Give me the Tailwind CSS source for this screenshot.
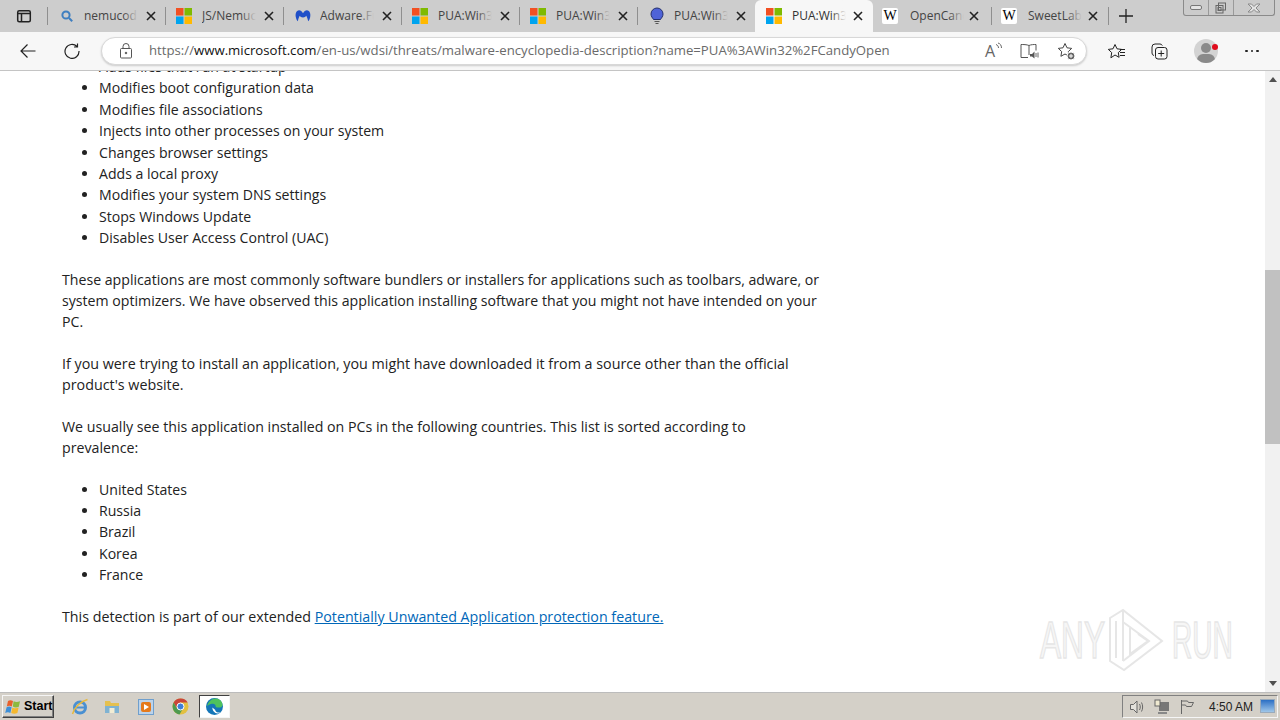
<!DOCTYPE html>
<html lang="en">
<head>
    <meta charset="UTF-8">
    <title>PUA:Win32/CandyOpen</title>
    <script src="https://cdn.jsdelivr.net/npm/@tailwindcss/browser@4"></script>
</head>
<body class="w-[1280px] h-[720px] overflow-hidden bg-white font-['Open_Sans',sans-serif] text-[#222] flex flex-col relative">
    <!-- Tab strip -->
    <div class="h-[32px] bg-[#cdcdcd] flex items-stretch shrink-0 relative">
        <div class="w-[47px] flex items-center justify-center">
            <svg class="ml-[1px]" width="16" height="16" viewBox="0 0 16 16" fill="none" stroke="#222" stroke-width="1.5"><rect x="1.7" y="2.7" width="12.6" height="11" rx="1.5"/><path d="M1.7 5.5h12.6M5.5 5.500v8" /></svg>
        </div>

        <div class="w-[118px] border-l border-[#8f8f8f] my-[7px] flex items-center relative text-[12px] text-[#444]">
            <span class="w-[36px] pl-[11px] flex"><svg width="16" height="16" viewBox="0 0 16 16" fill="none" stroke="#3f7fc0" stroke-width="2"><circle cx="7" cy="7" r="3.6"/><path d="M10 10l3.2 3.2"/></svg></span>
            <span class="w-[54px] overflow-hidden whitespace-nowrap">nemucod</span>
            <span class="absolute w-[15px] h-full left-[75px] bg-gradient-to-r from-transparent to-[#cdcdcd]"></span>
            <svg class="absolute left-[97px]" width="12" height="12" viewBox="0 0 12 12" stroke="#222" stroke-width="1.6"><path d="M2 2l8 8M10 2l-8 8"/></svg>
        </div>
        <div class="w-[118px] border-l border-[#8f8f8f] my-[7px] flex items-center relative text-[12px] text-[#444]">
            <span class="w-[36px] pl-[10px] flex"><svg width="16" height="16" viewBox="0 0 16 16"><rect width="7.5" height="7.5" fill="#f25022"/><rect x="8.5" width="7.5" height="7.5" fill="#7fba00"/><rect y="8.5" width="7.5" height="7.5" fill="#00a4ef"/><rect x="8.5" y="8.5" width="7.5" height="7.5" fill="#ffb900"/></svg></span>
            <span class="w-[54px] overflow-hidden whitespace-nowrap">JS/Nemucod</span>
            <span class="absolute w-[15px] h-full left-[75px] bg-gradient-to-r from-transparent to-[#cdcdcd]"></span>
            <svg class="absolute left-[97px]" width="12" height="12" viewBox="0 0 12 12" stroke="#222" stroke-width="1.6"><path d="M2 2l8 8M10 2l-8 8"/></svg>
        </div>
        <div class="w-[118px] border-l border-[#8f8f8f] my-[7px] flex items-center relative text-[12px] text-[#444]">
            <span class="w-[36px] pl-[11px] flex"><svg width="16" height="16" viewBox="0 0 16 16" fill="#1f4fc8"><path d="M8 5.2C9.2 3 11 2 12.6 2.4 15 3 15.800 6 15.200 9c-.3 1.700-1 3.300-2 4.300-.6-2.500-1.200-4.300-2-5.500-.8 1-1.500 1.700-3.200 1.700S5.400 8.800 4.800 7.800c-.8 1.200-1.400 3-2 5.500-1-1-1.700-2.600-2-4.300C.2 6 1 3 3.400 2.400 5 2 6.800 3 8 5.200z"/></svg></span>
            <span class="w-[54px] overflow-hidden whitespace-nowrap">Adware.Fusion</span>
            <span class="absolute w-[15px] h-full left-[75px] bg-gradient-to-r from-transparent to-[#cdcdcd]"></span>
            <svg class="absolute left-[97px]" width="12" height="12" viewBox="0 0 12 12" stroke="#222" stroke-width="1.6"><path d="M2 2l8 8M10 2l-8 8"/></svg>
        </div>
        <div class="w-[118px] border-l border-[#8f8f8f] my-[7px] flex items-center relative text-[12px] text-[#444]">
            <span class="w-[36px] pl-[10px] flex"><svg width="16" height="16" viewBox="0 0 16 16"><rect width="7.500" height="7.500" fill="#f25022"/><rect x="8.500" width="7.500" height="7.500" fill="#7fba00"/><rect y="8.500" width="7.500" height="7.500" fill="#00a4ef"/><rect x="8.500" y="8.500" width="7.500" height="7.500" fill="#ffb900"/></svg></span>
            <span class="w-[54px] overflow-hidden whitespace-nowrap">PUA:Win32</span>
            <span class="absolute w-[15px] h-full left-[75px] bg-gradient-to-r from-transparent to-[#cdcdcd]"></span>
            <svg class="absolute left-[97px]" width="12" height="12" viewBox="0 0 12 12" stroke="#222" stroke-width="1.6"><path d="M2 2l8 8M10 2l-8 8"/></svg>
        </div>
        <div class="w-[118px] border-l border-[#8f8f8f] my-[7px] flex items-center relative text-[12px] text-[#444]">
            <span class="w-[36px] pl-[10px] flex"><svg width="16" height="16" viewBox="0 0 16 16"><rect width="7.500" height="7.500" fill="#f25022"/><rect x="8.500" width="7.500" height="7.500" fill="#7fba00"/><rect y="8.500" width="7.500" height="7.500" fill="#00a4ef"/><rect x="8.500" y="8.500" width="7.500" height="7.500" fill="#ffb900"/></svg></span>
            <span class="w-[54px] overflow-hidden whitespace-nowrap">PUA:Win32</span>
            <span class="absolute w-[15px] h-full left-[75px] bg-gradient-to-r from-transparent to-[#cdcdcd]"></span>
            <svg class="absolute left-[97px]" width="12" height="12" viewBox="0 0 12 12" stroke="#222" stroke-width="1.6"><path d="M2 2l8 8M10 2l-8 8"/></svg>
        </div>
        <div class="w-[118px] border-l border-[#8f8f8f] my-[7px] flex items-center relative text-[12px] text-[#444]">
            <span class="w-[36px] pl-[11px] flex"><svg width="16" height="18" viewBox="0 0 16 18"><path d="M8 1a6 6 0 0 0-6 6c0 2.500 1.500 3.800 2.500 5.500h7C12.500 10.800 14 9.500 14 7a6 6 0 0 0-6-6z" fill="#4f63d8" stroke="#24306e"/><path d="M5.500 14.500h5M6.500 16.500h3" stroke="#555" stroke-width="1.200"/></svg></span>
            <span class="w-[54px] overflow-hidden whitespace-nowrap">PUA:Win32</span>
            <span class="absolute w-[15px] h-full left-[75px] bg-gradient-to-r from-transparent to-[#cdcdcd]"></span>
            <svg class="absolute left-[97px]" width="12" height="12" viewBox="0 0 12 12" stroke="#222" stroke-width="1.6"><path d="M2 2l8 8M10 2l-8 8"/></svg>
        </div>
        <!-- Active tab -->
        <div class="w-[118px] bg-[#f7f7f7] rounded-t-[6px] flex items-center relative text-[12px] text-[#333]">
            <span class="w-[37px] pl-[11px] flex"><svg width="16" height="16" viewBox="0 0 16 16"><rect width="7.500" height="7.500" fill="#f25022"/><rect x="8.500" width="7.500" height="7.500" fill="#7fba00"/><rect y="8.500" width="7.500" height="7.500" fill="#00a4ef"/><rect x="8.500" y="8.500" width="7.500" height="7.500" fill="#ffb900"/></svg></span>
            <span class="w-[54px] overflow-hidden whitespace-nowrap">PUA:Win32</span>
            <span class="absolute w-[15px] h-full left-[76px] bg-gradient-to-r from-transparent to-[#f7f7f7]"></span>
            <svg class="absolute left-[97px]" width="12" height="12" viewBox="0 0 12 12" stroke="#222" stroke-width="1.6"><path d="M2 2l8 8M10 2l-8 8"/></svg>
        </div>
        <div class="w-[118px] my-[7px] flex items-center relative text-[12px] text-[#444]">
            <span class="w-[37px] pl-[9px] flex"><span class="w-[16px] h-[16px] bg-white rounded-[2px] flex items-center justify-center font-['Liberation_Serif',serif] text-[14px] text-black leading-none">W</span></span>
            <span class="w-[54px] overflow-hidden whitespace-nowrap">OpenCandy</span>
            <span class="absolute w-[15px] h-full left-[76px] bg-gradient-to-r from-transparent to-[#cdcdcd]"></span>
            <svg class="absolute left-[95px]" width="12" height="12" viewBox="0 0 12 12" stroke="#222" stroke-width="1.6"><path d="M2 2l8 8M10 2l-8 8"/></svg>
        </div>
        <div class="w-[118px] border-l border-r border-[#8f8f8f] my-[7px] flex items-center relative text-[12px] text-[#444]">
            <span class="w-[36px] pl-[9px] flex"><span class="w-[16px] h-[16px] bg-white rounded-[2px] flex items-center justify-center font-['Liberation_Serif',serif] text-[14px] text-black leading-none">W</span></span>
            <span class="w-[54px] overflow-hidden whitespace-nowrap">SweetLabs</span>
            <span class="absolute w-[15px] h-full left-[75px] bg-gradient-to-r from-transparent to-[#cdcdcd]"></span>
            <svg class="absolute left-[95px]" width="12" height="12" viewBox="0 0 12 12" stroke="#222" stroke-width="1.6"><path d="M2 2l8 8M10 2l-8 8"/></svg>
        </div>
        <div class="flex items-center ml-[9px]">
            <svg width="16" height="16" viewBox="0 0 16 16" stroke="#222" stroke-width="1.300"><path d="M8 1v14M1 8h14"/></svg>
        </div>
        <!-- Window buttons -->
        <div class="absolute left-[1183px] top-0 w-[92px] h-[16px] border border-t-0 border-[#8a8a8a] rounded-b-[3px] bg-[#cbcbcb] flex">
            <div class="w-[25px] flex items-center justify-center border-r border-[#9a9a9a]"><span class="w-[12px] h-[5px] border border-[#777] rounded-[2px] bg-[#e4e4e4]"></span></div>
            <div class="w-[25px] flex items-center justify-center border-r border-[#9a9a9a]"><svg width="12" height="12" viewBox="0 0 12 12" fill="none" stroke="#666"><rect x="1" y="3.500" width="7" height="7.500"/><rect x="3.500" y="1" width="7" height="7" /><rect x="3" y="5.500" width="3" height="3" /></svg></div>
            <div class="flex-1 flex items-center justify-center"><svg width="14" height="10" viewBox="0 0 14 10" fill="#e2e2e2" stroke="#8a8a8a"><path d="M1 1h3.500L7 3.500 9.500 1H13L9 5l4 4H9.500L7 6.500 4.500 9H1l4-4z"/></svg></div>
        </div>
    </div>

    <!-- Toolbar -->
    <div class="h-[39px] bg-[#f7f7f7] border-b border-[#c4c4c4] shrink-0 flex items-center relative">
        <div class="w-[101px] flex items-center pl-[20px] gap-[28px]">
            <svg width="16" height="16" viewBox="0 0 16 16" fill="none" stroke="#222" stroke-width="1.200"><path d="M15.500 8H1M7.500 1.500L1 8l6.500 6.500"/></svg>
            <svg width="16" height="16" viewBox="0 0 16 16" fill="none" stroke="#222" stroke-width="1.200"><path d="M13 3.500A7 7 0 1 0 15 8M13.500 .5v3.500H10"/></svg>
        </div>
        <div class="w-[986px] h-[28px] -mt-[1px] bg-white border border-[#d8d8d8] rounded-full shadow-[0_1px_2px_rgba(0,0,0,0.18)] flex items-center relative">
            <svg class="ml-[18px]" width="12" height="16" viewBox="0 0 12 16" fill="none" stroke="#555"><rect x=".5" y="5.500" width="11" height="9.500" rx="1"/><path d="M3 5.500V3.500a3 3 0 0 1 6 0v2"/><circle cx="6" cy="10" r=".8" fill="#555"/></svg>
            <span class="ml-[17px] pt-[1px] text-[13.2px] text-[#6a6a6a] whitespace-nowrap">https://<span class="text-[#111]">www.microsoft.com</span>/en-us/wdsi/threats/malware-encyclopedia-description?name=PUA%3AWin32%2FCandyOpen</span>
            <span class="absolute left-[883px] top-[2px] text-[16px] text-[#666] leading-[22px]">A</span>
            <svg class="absolute left-[893px] top-[4px]" width="8" height="10" viewBox="0 0 8 10" fill="none" stroke="#666"><path d="M1 2.500c1.500.5 2.500 1.700 2.500 3.500M3 1c2.200.6 3.500 2.300 3.500 5"/></svg>
            <svg class="absolute left-[918px] top-[5px]" width="19" height="17" viewBox="0 0 19 17" fill="none" stroke="#555"><path d="M9 2.500C7 1.500 3 1.500 1 1.500v13h7M9 2.500c2-1 5-1 7-1v6M9 2.500V12"/><path d="M10 11h2l2.500-2.500v7L12 13.500h-2z" fill="#555" stroke="none"/><path d="M16 10v4M18 9.500v5" stroke-width=".9"/></svg>
            <svg class="absolute left-[955px] top-[4px]" width="19" height="19" viewBox="0 0 19 19" fill="none" stroke="#444"><path d="M8 1.500l2 4.300 4.700.6-3.400 3.200.8 4.700L8 12l-4.100 2.300.8-4.700L1.300 6.400 6 5.800z"/><circle cx="14" cy="14" r="4" fill="#666" stroke="#fff"/><path d="M14 12v4M12 14h4" stroke="#fff"/></svg>
        </div>
        <svg class="ml-[20px]" width="19" height="17" viewBox="0 0 19 17" fill="none" stroke="#222"><path d="M8 1.500l2 4.300 4.700.6-3.400 3.200.8 4.700L8 12l-4.100 2.800.8-5.200L1.300 6.400 6 5.800z"/><path d="M13 6.500h5M13 9.500h5M13 12.500h5"/></svg>
        <svg class="ml-[25px]" width="17" height="17" viewBox="0 0 17 17" fill="none" stroke="#222"><path d="M3 12.500A2.500 2.500 0 0 1 1 10V4a3 3 0 0 1 3-3h5a2.500 2.500 0 0 1 2.300 1.600"/><rect x="4.500" y="4.500" width="11.500" height="11.500" rx="2.500"/><path d="M10.200 7.500v6M7.200 10.500h6"/></svg>
        <div class="ml-[26px] relative w-[24px] h-[24px] rounded-full bg-[#d3d3d3] overflow-hidden">
            <span class="absolute left-[7px] top-[4px] w-[10px] h-[10px] rounded-full bg-[#8a8a8a]"></span>
            <span class="absolute left-[3px] top-[15px] w-[18px] h-[12px] rounded-full bg-[#8a8a8a]"></span>
        </div>
        <span class="absolute left-[1212px] top-[12px] w-[6px] h-[6px] rounded-full bg-[#e00b1c]"></span>
        <div class="ml-[27px] flex gap-[3px]">
            <span class="w-[2.500px] h-[2.500px] bg-[#222] rounded-full"></span>
            <span class="w-[2.500px] h-[2.500px] bg-[#222] rounded-full"></span>
            <span class="w-[2.500px] h-[2.500px] bg-[#222] rounded-full"></span>
        </div>
    </div>

    <!-- Page content -->
    <div class="flex-1 flex overflow-hidden relative">
        <main class="flex-1 overflow-hidden pl-[62px] text-[14.1px] leading-[21.4px]">
            <div class="w-[760px] -mt-[15px]">
                <ul class="list-disc pl-[37px] mb-[20px]">
                    <li>Adds files that run at startup</li>
                    <li>Modifies boot configuration data</li>
                    <li>Modifies file associations</li>
                    <li>Injects into other processes on your system</li>
                    <li>Changes browser settings</li>
                    <li>Adds a local proxy</li>
                    <li>Modifies your system DNS settings</li>
                    <li>Stops Windows Update</li>
                    <li>Disables User Access Control (UAC)</li>
                </ul>
                <p class="mb-[20px] text-[14.15px]">These applications are most commonly software bundlers or installers for applications such as toolbars, adware, or system optimizers. We have observed this application installing software that you might not have intended on your PC.</p>
                <p class="mb-[20px] text-[14.3px]">If you were trying to install an application, you might have downloaded it from a source other than the official product's website.</p>
                <p class="mb-[20px] text-[14.2px]">We usually see this application installed on PCs in the following countries. This list is sorted according to prevalence:</p>
                <ul class="list-disc pl-[37px] mb-[20px]">
                    <li>United States</li>
                    <li>Russia</li>
                    <li>Brazil</li>
                    <li>Korea</li>
                    <li>France</li>
                </ul>
                <p class="text-[14.25px]">This detection is part of our extended <a class="text-[#0067b8] underline" href="#">Potentially Unwanted Application protection feature.</a></p>
            </div>
        </main>
        <!-- Scrollbar -->
        <div class="w-[15px] bg-[#f1f1f1] flex flex-col items-center relative">
            <span class="mt-[6px] w-0 h-0 border-x-[4px] border-x-transparent border-b-[5px] border-b-[#505050]"></span>
            <span class="absolute top-[199px] left-0 w-[15px] h-[174px] bg-[#c1c1c1]"></span>
            <span class="mt-auto mb-[6px] w-0 h-0 border-x-[4px] border-x-transparent border-t-[5px] border-t-[#505050]"></span>
        </div>
        <!-- Watermark -->
        <div class="absolute left-[1040px] top-[537px] h-[64px] w-[194px] text-[#f6f6f6] [-webkit-text-stroke:1.5px_#e6e6e6] font-['Liberation_Sans',sans-serif] text-[51px] leading-[64px]">
            <span class="absolute left-0 top-[1px] origin-left scale-x-[0.62] whitespace-nowrap">ANY</span>
            <svg class="absolute left-[66px] top-0" width="60" height="64" viewBox="0 0 60 64" fill="none" stroke="#e6e6e6" stroke-width="2"><path d="M4 10L17 2l39 31-38 29-14-9zM10 13v37M17 2v51M17 14l26 19-26 20M24 20v26l18-13-10-7"/></svg>
            <span class="absolute left-[132px] top-[1px] origin-left scale-x-[0.55] whitespace-nowrap">RUN</span>
        </div>
    </div>

    <!-- Taskbar -->
    <div class="h-[28px] bg-[#d4d0c8] border-t border-[#bcbcbc] shrink-0 flex items-center relative">
        <div class="ml-[2px] w-[52px] h-[23px] bg-[#d4d0c8] border border-[#f5f5f5] border-r-[#404040] border-b-[#404040] shadow-[inset_-1px_-1px_0_#808080] flex items-center pl-[2px] gap-[2px]">
            <svg width="17" height="16" viewBox="0 0 17 16"><path d="M3 2c1.500-1 3-1 5 0L6.800 7.500C5 6.500 3.500 6.500 1.800 7.500z" fill="#e8602c"/><path d="M8.600 2.300c2 1 4 1 6.400 0l-1.200 5.500c-2 1-4 1-6-.2z" fill="#8cb93f"/><path d="M1.600 8.300c1.700-1 3.300-1 5 0L5.400 14c-1.700-1-3.400-1-5.200 0z" fill="#3d8fd8"/><path d="M7.400 8.400c2 1.200 4 1.200 6.200.2L12.400 14c-2 1-4.200 1-6.200 0z" fill="#f5b82e"/></svg>
            <span class="font-['Liberation_Sans',sans-serif] font-bold text-[12.5px] text-black">Start</span>
        </div>
        <svg class="ml-[17px]" width="18" height="18" viewBox="0 0 18 18" fill="none"><circle cx="9" cy="9.500" r="5.500" stroke="#4a90d2" stroke-width="3"/><path d="M4 9.500h10" stroke="#4a90d2" stroke-width="2"/><path d="M1.500 16C3 10 9 3.500 16.500 1.500" stroke="#e8b93c" stroke-width="1.500"/></svg>
        <svg class="ml-[15px]" width="16" height="16" viewBox="0 0 16 16"><path d="M1 2h5l1 2h8v10H1z" fill="#e5c04f"/><rect x="1" y="7" width="14" height="7" fill="#7fb2d2"/><rect x="5.500" y="9" width="5" height="5" fill="#f1ecd4"/></svg>
        <svg class="ml-[18px]" width="16" height="16" viewBox="0 0 16 16"><rect x=".5" y=".5" width="15" height="15" fill="#bcd3ea" stroke="#6f9fcd"/><rect x="3" y="3" width="10" height="10" rx="2" fill="#e57a1c"/><path d="M6 5l5 3-5 3z" fill="#fff"/></svg>
        <svg class="ml-[18px]" width="17" height="17" viewBox="0 0 17 17"><circle cx="8.500" cy="8.500" r="8" fill="#e2c041"/><path d="M8.500 .5a8 8 0 0 0-6.900 4L5 10.500l3.500-6h7.200A8 8 0 0 0 8.500 .5z" fill="#c9453a"/><path d="M1.600 4.500A8 8 0 0 0 7.500 16.400L11 10.500H5z" fill="#4e9a4f"/><circle cx="8.500" cy="8.500" r="3.500" fill="#3d7fd8" stroke="#fff"/></svg>
        <div class="ml-[10px] w-[31px] h-[23px] bg-white border border-[#404040] border-r-[#f5f5f5] border-b-[#f5f5f5] flex items-center justify-center">
            <svg width="17" height="17" viewBox="0 0 16 16"><circle cx="8" cy="8" r="8" fill="#1576b8"/><path d="M1 8C2 3 6 .5 9 .5c4 0 6.500 3 6.500 6 0 1.500-1.500 2.500-3.500 2.500-2 0-3-.5-3-1.500C9 6 7.500 5 5.500 5.500 3 6.200 1.500 7 1 8z" fill="#4fc25d"/><path d="M6 9c0 3 2 5.500 5 5.500 1 0 2-.3 3-1-2.500.5-5 0-5.500-2.500z" fill="#fff"/></svg>
        </div>
        <!-- Tray -->
        <div class="ml-auto mr-[2px] w-[156px] h-[23px] border border-[#808080] border-r-[#f5f5f5] border-b-[#f5f5f5] flex items-center pl-[6px] relative">
            <svg width="16" height="16" viewBox="0 0 16 16" fill="none" stroke="#666"><path d="M1.500 5.500h3l3.500-3.500v12l-3.500-3.500h-3z" fill="#e4e2dc"/><path d="M10.500 5c1 1.800 1 4.200 0 6M12.500 3.500c1.500 2.700 1.500 6.300 0 9"/></svg>
            <svg class="ml-[9px]" width="16" height="16" viewBox="0 0 16 16"><rect x="5" y="3" width="10" height="9" fill="#777"/><rect x="1" y="1" width="5" height="6" fill="#efe9d0" stroke="#666"/><rect x="4" y="13" width="9" height="2" fill="#888"/></svg>
            <svg class="ml-[9px]" width="16" height="16" viewBox="0 0 16 16" fill="none" stroke="#666"><path d="M2.500 1v14M2.500 2h6l1 1.500h5l-2 4h-5l-1-1.500h-4"/></svg>
            <span class="ml-[14px] font-['Liberation_Sans',sans-serif] text-[12px] text-[#222]">4:50 AM</span>
            <span class="absolute right-[2px] top-[3px] w-[15px] h-[14px] bg-gradient-to-b from-[#2a6fc4] to-[#9fc6e8] border border-[#9ab]"></span>
        </div>
    </div>
</body>
</html>
